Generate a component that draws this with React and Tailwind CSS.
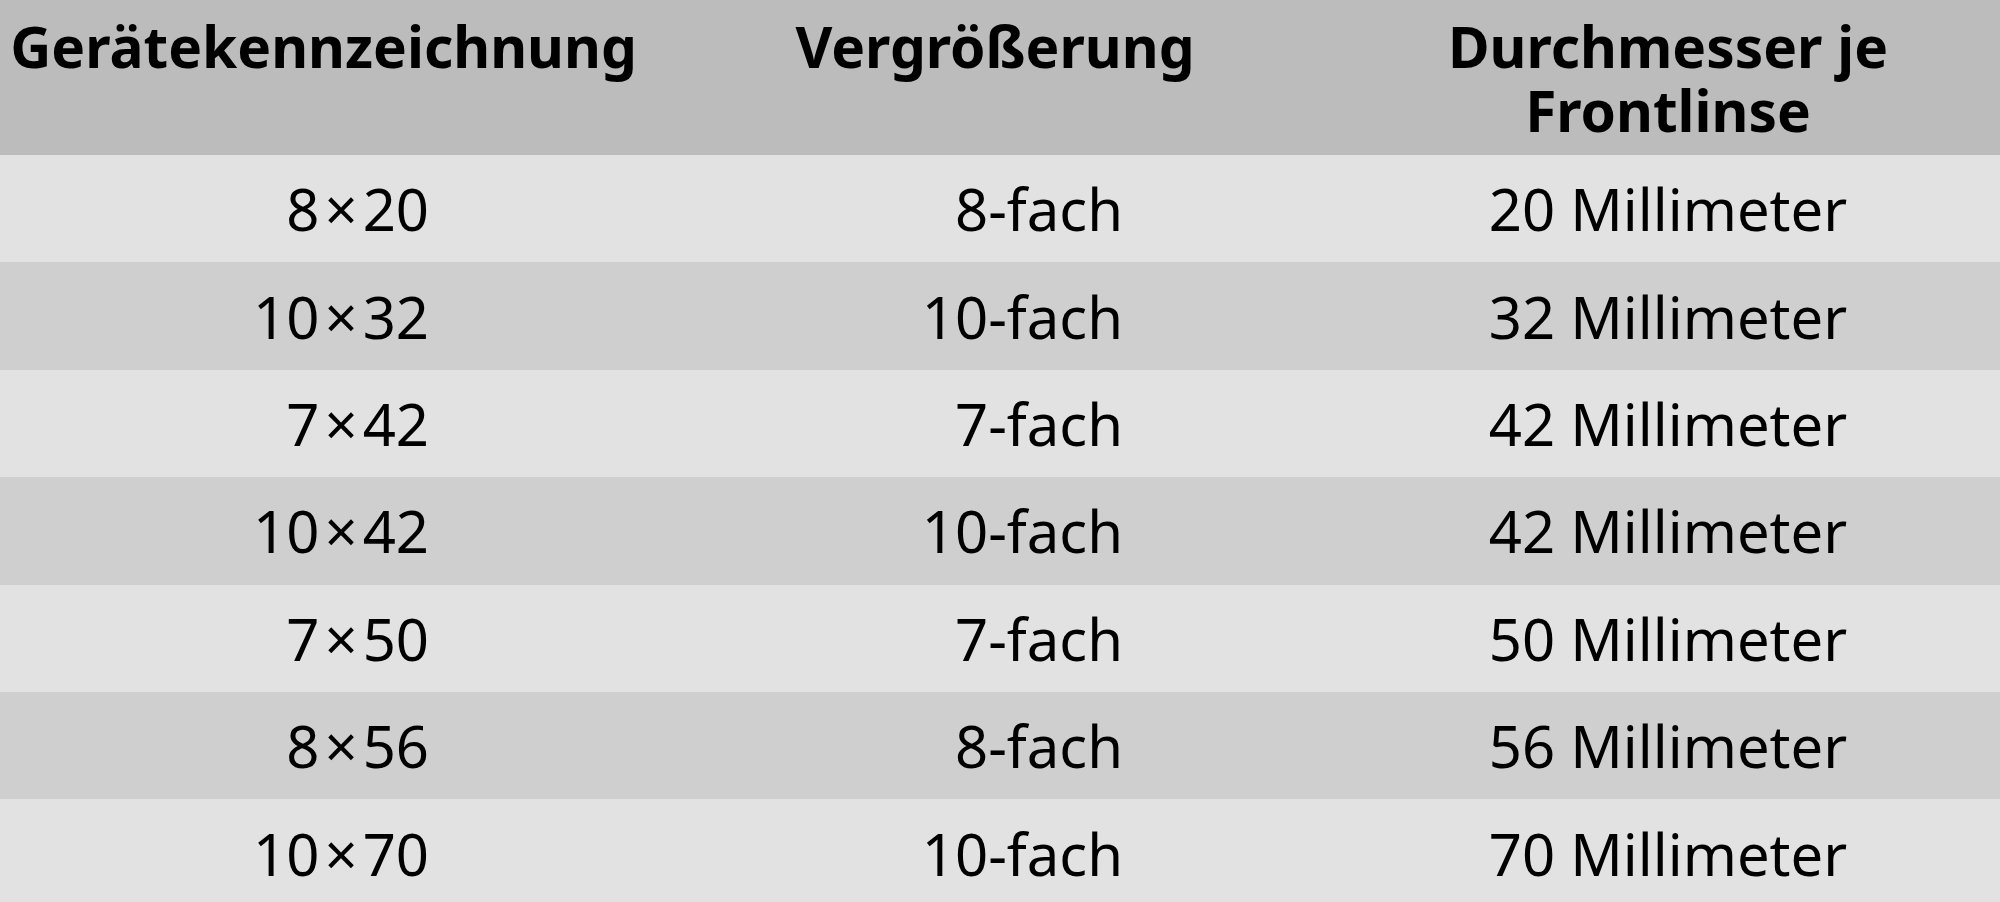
import React from "react";

const rows = [
  { a: "8", b: "20", zoom: "8-fach", lens: "20 Millimeter" },
  { a: "10", b: "32", zoom: "10-fach", lens: "32 Millimeter" },
  { a: "7", b: "42", zoom: "7-fach", lens: "42 Millimeter" },
  { a: "10", b: "42", zoom: "10-fach", lens: "42 Millimeter" },
  { a: "7", b: "50", zoom: "7-fach", lens: "50 Millimeter" },
  { a: "8", b: "56", zoom: "8-fach", lens: "56 Millimeter" },
  { a: "10", b: "70", zoom: "10-fach", lens: "70 Millimeter" },
];

export default function App() {
  return (
    <div className="w-[2000px] h-[902px] overflow-hidden bg-[#e2e2e2] text-black font-['Noto_Sans',sans-serif]">
      {/* Kopfzeile */}
      <div className="grid grid-cols-[647px_696px_657px] h-[155px] bg-[#bcbcbc] text-[56.8px] leading-[64px] font-bold">
        <div className="pt-[14px] text-center">Gerätekennzeichnung</div>
        <div className="pt-[14px] text-center">Vergrößerung</div>
        <div className="pt-[14px] pr-[7px] text-center">Durchmesser je<br />Frontlinse</div>
      </div>
      {rows.map((row, i) => (
        <div
          key={i}
          className={
            "grid grid-cols-[647px_696px_657px] h-[107.4px] items-center text-[58px] " +
            (i % 2 === 0 ? "bg-[#e2e2e2]" : "bg-[#cfcfcf]")
          }
        >
          <div className="text-right pr-[218px]">
            {row.a}<span className="mx-[5px]">×</span>{row.b}
          </div>
          <div className="text-right pr-[220px]">{row.zoom}</div>
          <div className="text-center pr-[7px]">{row.lens}</div>
        </div>
      ))}
    </div>
  );
}
